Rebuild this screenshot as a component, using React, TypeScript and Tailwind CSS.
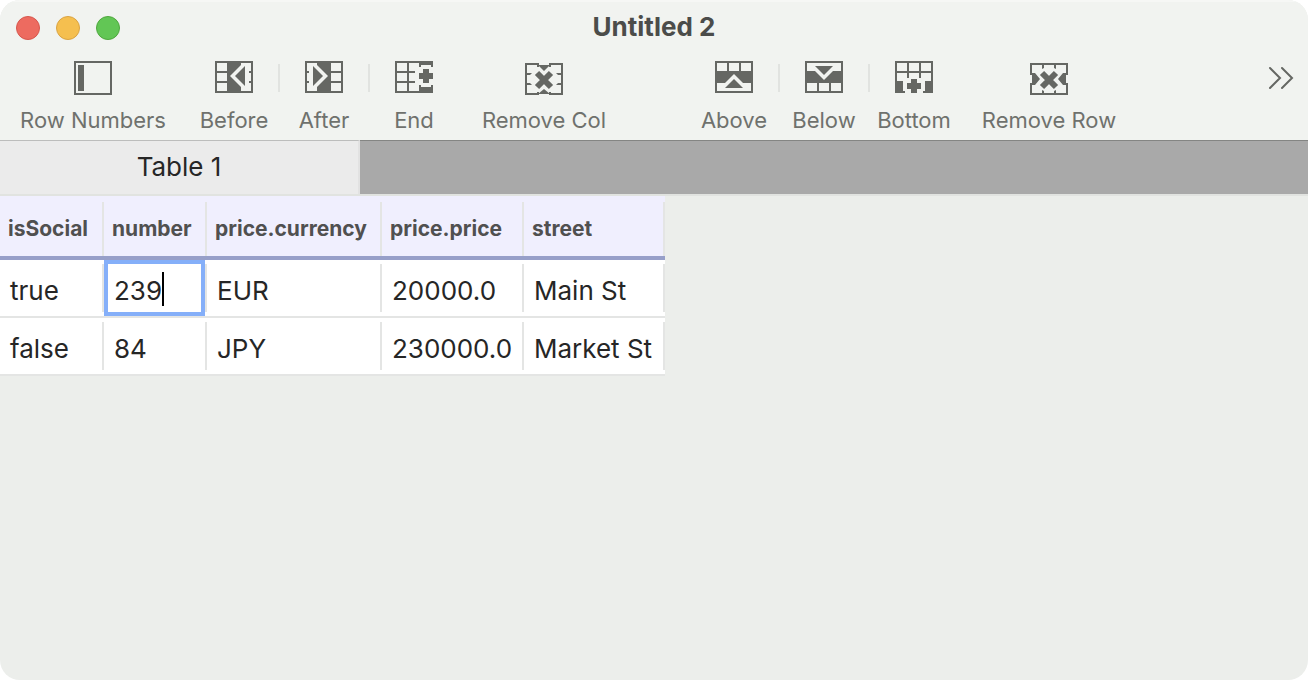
import type { ReactNode } from "react";

const INK = "#656763";
const PAPER = "#f1f3f0";

function Glyph({ height = 32, children }: { height?: number; children: ReactNode }) {
  return (
    <svg width="38" height={height} viewBox={`0 0 38 ${height}`} fill={INK} aria-hidden="true">
      {children}
    </svg>
  );
}

const Frame = ({ height = 32 }: { height?: number }) => (
  <rect x="1" y="1" width="36" height={height - 2} fill="none" stroke={INK} strokeWidth="2" />
);

const RowNumbersIcon = () => (
  <Glyph height={34}>
    <Frame height={34} />
    <rect x="4" y="4" width="6" height="26" />
  </Glyph>
);

const BesideShape = () => (
  <>
    <Frame />
    <path d="M2 10h10v2H2zM2 20h10v2H2zM34 10h2v2h-2zM34 20h2v2h-2zM12 2h14v28H12z" />
    <path d="M15 15 28 2v26z" fill={PAPER} />
    <path d="M20 15 30 5v20z" />
  </>
);

const BeforeIcon = () => (
  <Glyph>
    <BesideShape />
  </Glyph>
);

const AfterIcon = () => (
  <Glyph>
    <g transform="matrix(-1 0 0 1 38 0)">
      <BesideShape />
    </g>
  </Glyph>
);

const EndIcon = () => (
  <Glyph>
    <path d="M0 0h24v2H0zM0 0h2v32H0zM0 30h24v2H0zM12 0h2v32h-2zM0 10h20v2H0zM0 20h20v2H0z" />
    <path d="M24 0h14v6h-2V4H26v2h-2zM24 32h14v-8h-2v2H26v-2h-2z" />
    <path d="M28 8h6v4h4v6h-4v4h-6v-4h-4v-6h4z" />
  </Glyph>
);

const Cross = () => <path d="M12 10 26 24M26 10 12 24" stroke={INK} strokeWidth="6" />;

const RemoveColIcon = () => (
  <Glyph>
    <path d="M0 0h14v2h10V0h14v32H24v-2H14v2H0zM2 2v28h10v-1h2v1h10v-1h2v1h10V2H26v2h-2V2H14v2h-2V2z" fillRule="evenodd" />
    <path d="M13 2h12l-6 6zM13 31h12l-6-5z" />
    <path d="M2 10h5l-2 2H2zM2 20h3l2 2H2zM36 10h-5l2 2h3zM36 20h-3l-2 2h5z" />
    <Cross />
  </Glyph>
);

const RemoveRowIcon = () => (
  <Glyph>
    <path d="M0 0h38v12h-2V2H2v10H0zM0 32h38V20h-2v10H2V20H0z" />
    <path d="M2 10h3l5 6-5 6H2zM36 10h-3l-5 6 5 6h3z" />
    <path d="M12 2h2v3l-2 1zM24 2h2v4l-2-1zM12 30h2v-2l-2-1zM24 30h2v-3l-2 1z" />
    <Cross />
  </Glyph>
);

const StackShape = () => (
  <>
    <Frame />
    <path d="M12 2h2v8h-2zM24 2h2v8h-2zM2 10h34v12H2z" />
    <path d="M19 13 29 23H9z" fill={PAPER} />
    <path d="M19 18 28 27H10z" />
  </>
);

const AboveIcon = () => (
  <Glyph>
    <StackShape />
  </Glyph>
);

const BelowIcon = () => (
  <Glyph>
    <g transform="matrix(1 0 0 -1 0 32)">
      <StackShape />
    </g>
  </Glyph>
);

const BottomIcon = () => (
  <Glyph>
    <path d="M0 0h38v2H0zM0 2h2v18H0zM36 2h2v18h-2zM2 10h34v2H2zM12 2h2v15h-2zM24 2h2v15h-2z" />
    <path d="M0 20h8v10h2v2H0zM38 20h-8v10h-2v2h10z" />
    <path d="M16 18h6v4h4v6h-4v4h-6v-4h-4v-6h4z" />
  </Glyph>
);

function Tool({ icon, label, width, low }: { icon: ReactNode; label: string; width: string; low?: boolean }) {
  return (
    <button type="button" className={`flex flex-col items-center whitespace-nowrap ${width}`}>
      <span className={`flex h-9 flex-col ${low ? "pt-0.5" : ""}`}>{icon}</span>
      <span className="mt-[7px] text-[22px] leading-8 text-[#6f716d]">{label}</span>
    </button>
  );
}

const Divider = () => <span className="mt-[3px] h-7 w-0.5 shrink-0 bg-[#e1e3e0]" />;

const columns = [
  { name: "isSocial", width: "w-[104px]" },
  { name: "number", width: "w-[103px]" },
  { name: "price.currency", width: "w-[175px]" },
  { name: "price.price", width: "w-[142px]" },
  { name: "street", width: "w-[141px]" },
];

const rows = [
  ["true", "239", "EUR", "20000.0", "Main St"],
  ["false", "84", "JPY", "230000.0", "Market St"],
];

export default function App() {
  return (
    <div className="min-h-screen bg-white font-['Inter',sans-serif]">
      <main className="flex min-h-screen flex-col overflow-hidden rounded-[20px] bg-[#eceeeb] text-[#262626]">
        <header className="border-t-2 border-[#f6f7f5] bg-[#f1f3f0]">
          <div className="grid h-[52px] grid-cols-[1fr_auto_1fr] items-center px-4">
            <div className="flex gap-4">
              <button type="button" aria-label="Close" className="size-6 rounded-full border border-[#d6574d] bg-[#ed6b60]" />
              <button type="button" aria-label="Minimize" className="size-6 rounded-full border border-[#d9a343] bg-[#f5bf4f]" />
              <button type="button" aria-label="Zoom" className="size-6 rounded-full border border-[#4fa73e] bg-[#62c655]" />
            </div>
            <h1 className="pb-0.5 text-[26px] leading-8 font-bold text-[#4b4c4a]">Untitled 2</h1>
          </div>
          <div className="flex h-[86px] items-start pt-[7px] pr-3 pl-[3px]">
            <Tool icon={<RowNumbersIcon />} label="Row Numbers" width="w-[180px]" />
            <div className="ml-[7px] flex">
              <Tool icon={<BeforeIcon />} label="Before" width="w-[88px]" />
              <Divider />
              <Tool icon={<AfterIcon />} label="After" width="w-[88px]" />
              <Divider />
              <Tool icon={<EndIcon />} label="End" width="w-[88px]" />
            </div>
            <Tool icon={<RemoveColIcon />} label="Remove Col" width="w-[172px]" low />
            <div className="ml-[60px] flex">
              <Tool icon={<AboveIcon />} label="Above" width="w-[88px]" />
              <Divider />
              <Tool icon={<BelowIcon />} label="Below" width="w-[88px]" />
              <Divider />
              <Tool icon={<BottomIcon />} label="Bottom" width="w-[88px]" />
            </div>
            <Tool icon={<RemoveRowIcon />} label="Remove Row" width="w-[182px]" low />
            <button type="button" aria-label="More tools" className="mt-1 ml-auto">
              <svg width="28" height="26" viewBox="0 0 28 26" fill="none" stroke={INK} strokeWidth="2" strokeLinecap="round" aria-hidden="true">
                <path d="M2 3 12 13 2 23M14 3 24 13 14 23" />
              </svg>
            </button>
          </div>
        </header>

        <nav className="flex h-14 border-b-2 border-[#e1e3e0] bg-[#a9a9a9]">
          <button type="button" className="w-[360px] border-t border-r-2 border-t-[#bcbdbc] border-r-[#e2e2e2] bg-[#ebebeb] pb-0.5 text-[26px] leading-8">
            Table 1
          </button>
          <span className="flex-1 border-t border-[#848583]" />
        </nav>

        <table className="w-[665px] table-fixed border-separate border-spacing-0 bg-white text-left">
          <thead>
            <tr>
              {columns.map((column) => (
                <th key={column.name} scope="col" className={`border-b-4 border-[#979fc9] bg-[#f0effe] p-0 pt-1.5 ${column.width}`}>
                  <div className="flex h-[54px] items-center border-r-2 border-[#e4e5e4] pl-2 text-[21px] leading-7 font-bold whitespace-nowrap text-[#505050]">
                    {column.name}
                  </div>
                </th>
              ))}
            </tr>
          </thead>
          <tbody>
            {rows.map((row, r) => (
              <tr key={row[0]}>
                {row.map((value, c) => {
                  const editing = r === 0 && c === 1;
                  return (
                    <td key={columns[c].name} className="border-b-2 border-[#e4e5e4] p-0">
                      {editing ? (
                        <div className="relative flex h-14 items-center">
                          <input
                            aria-label="number"
                            defaultValue={value}
                            className="h-14 w-[101px] border-4 border-[#85aff9] bg-white pt-1 pl-1.5 text-[26px] leading-8 caret-transparent outline-none"
                          />
                          <span className="h-12 w-0.5 bg-[#e4e5e4]" />
                          <span className="absolute top-3 left-[58px] h-[34px] w-0.5 bg-black" />
                        </div>
                      ) : (
                        <div className="flex h-14 items-center">
                          <span className="flex h-12 flex-1 items-center border-r-2 border-[#e4e5e4] pt-1.5 pl-2.5 text-[26px] leading-8 whitespace-nowrap">
                            {value}
                          </span>
                        </div>
                      )}
                    </td>
                  );
                })}
              </tr>
            ))}
          </tbody>
        </table>
      </main>
    </div>
  );
}
